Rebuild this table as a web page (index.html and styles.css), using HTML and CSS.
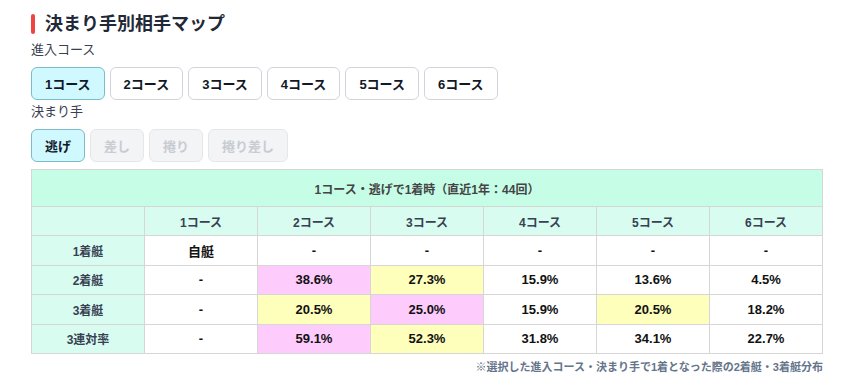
FILE: index.html
```html
<!DOCTYPE html>
<html lang="ja">
<head>
<meta charset="utf-8">
<link rel="stylesheet" href="styles.css">
</head>
<body>
<div class="wrap">
  <h2 class="title">決まり手別相手マップ</h2>
  <div class="label">進入コース</div>
  <div class="btns">
    <button class="btn active">1コース</button>
    <button class="btn">2コース</button>
    <button class="btn">3コース</button>
    <button class="btn">4コース</button>
    <button class="btn">5コース</button>
    <button class="btn">6コース</button>
  </div>
  <div class="label">決まり手</div>
  <div class="btns">
    <button class="btn active">逃げ</button>
    <button class="btn disabled">差し</button>
    <button class="btn disabled">捲り</button>
    <button class="btn disabled">捲り差し</button>
  </div>
  <table class="map">
    <tr class="cap"><th colspan="7">1コース・逃げで1着時（直近1年：44回）</th></tr>
    <tr class="head"><th></th><th>1コース</th><th>2コース</th><th>3コース</th><th>4コース</th><th>5コース</th><th>6コース</th></tr>
    <tr><th>1着艇</th><td>自艇</td><td>-</td><td>-</td><td>-</td><td>-</td><td>-</td></tr>
    <tr><th>2着艇</th><td>-</td><td class="pink">38.6%</td><td class="yellow">27.3%</td><td>15.9%</td><td>13.6%</td><td>4.5%</td></tr>
    <tr><th>3着艇</th><td>-</td><td class="yellow">20.5%</td><td class="pink">25.0%</td><td>15.9%</td><td class="yellow">20.5%</td><td>18.2%</td></tr>
    <tr><th>3連対率</th><td>-</td><td class="pink">59.1%</td><td class="yellow">52.3%</td><td>31.8%</td><td>34.1%</td><td>22.7%</td></tr>
  </table>
  <p class="note">※選択した進入コース・決まり手で1着となった際の2着艇・3着艇分布</p>
</div>
</body>
</html>
```
FILE: styles.css
```css
* { box-sizing: border-box; }
html, body { margin: 0; padding: 0; background: #fff; }
body {
  font-family: "Liberation Sans", "Noto Sans CJK JP", sans-serif;
  color: #111827;
}
.wrap { padding: 10px 27px 0 31px; width: 849px; }
.title {
  margin: 0;
  font-size: 18px;
  line-height: 28px;
  height: 28px;
  font-weight: 700;
  color: #1f2937;
  display: flex;
  align-items: center;
}
.title::before {
  content: "";
  display: block;
  width: 4px;
  height: 20px;
  background: #ef4444;
  border-radius: 2px;
  margin-right: 10px;
}
.label {
  margin-top: 2px;
  font-size: 13px;
  line-height: 20px;
  color: #374151;
}
.btns { display: flex; gap: 5px; margin-top: 7px; }
.btn {
  height: 33px;
  padding: 0 13px;
  font-family: inherit;
  font-size: 13px;
  font-weight: 700;
  color: #111827;
  background: #fff;
  border: 1px solid #d1d5db;
  border-radius: 6px;
  min-width: 53px;
}
.btn.active { background: #cff9fe; border-color: #7cbcc8; }
.btn.disabled { background: #f3f4f6; color: #c8ccd2; border-color: #e5e7eb; }
.map {
  margin-top: 7px;
  border-collapse: collapse;
  table-layout: fixed;
  width: 792px;
  font-size: 12px;
}
.map th, .map td {
  border: 1px solid #d6d6d6;
  text-align: center;
  font-weight: 700;
  height: 29.5px;
  padding: 0;
}
.map td { font-size: 13px; color: #111; background: #fff; }
.map th { background: #d9fcf1; color: #374151; }
.map .cap th { background: #c6fde7; height: 37px; color: #444; }
.map .head th { height: 29px; }
.map td.pink { background: #fecbfd; }
.map td.yellow { background: #feffbb; }
.note {
  margin: 4px 0 0;
  width: 792px;
  text-align: right;
  font-size: 11px;
  font-weight: 700;
  color: #64748b;
}
```
